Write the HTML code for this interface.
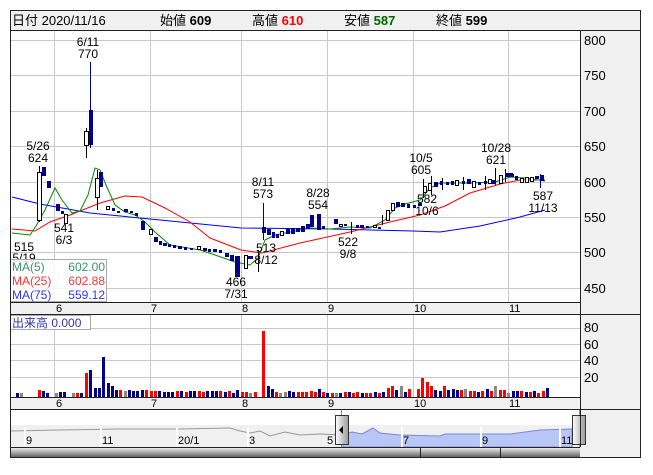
<!DOCTYPE html>
<html><head><meta charset="utf-8"><style>
body{margin:0;background:#fff;width:653px;height:470px;overflow:hidden;font-family:"Liberation Sans","Noto Sans CJK JP",sans-serif}
svg text{font-family:"Liberation Sans","Noto Sans CJK JP",sans-serif}
</style></head><body>
<svg width="653" height="470" xmlns="http://www.w3.org/2000/svg">
<defs>
<linearGradient id="sb" x1="0" y1="0" x2="0" y2="1"><stop offset="0" stop-color="#fafafa"/><stop offset="0.5" stop-color="#a8a8a8"/><stop offset="1" stop-color="#555"/></linearGradient>
<linearGradient id="hd" x1="0" y1="0" x2="1" y2="0"><stop offset="0" stop-color="#fff"/><stop offset="1" stop-color="#999"/></linearGradient>
</defs>
<rect x="0" y="0" width="653" height="470" fill="#fff"/>
<rect x="10" y="10" width="631" height="20" fill="#f0f0f0"/>
<text x="12" y="25" font-size="13" fill="#000">日付 2020/11/16</text>
<text x="160" y="25" font-size="13" fill="#000">始値 <tspan font-weight="bold">609</tspan></text>
<text x="252" y="25" font-size="13" fill="#000">高値 <tspan font-weight="bold" fill="#f00">610</tspan></text>
<text x="344" y="25" font-size="13" fill="#000">安値 <tspan font-weight="bold" fill="#060">587</tspan></text>
<text x="436" y="25" font-size="13" fill="#000">終値 <tspan font-weight="bold">599</tspan></text>
<rect x="580" y="30" width="61" height="428" fill="#f0f0f0"/>
<rect x="10" y="302" width="570" height="13" fill="#f0f0f0"/>
<rect x="10" y="397" width="570" height="13" fill="#f0f0f0"/>
<g stroke="#c8c8c8" stroke-width="1">
<line x1="10" y1="75.5" x2="580" y2="75.5"/><line x1="10" y1="111.5" x2="580" y2="111.5"/><line x1="10" y1="146.5" x2="580" y2="146.5"/><line x1="10" y1="182.5" x2="580" y2="182.5"/><line x1="10" y1="217.5" x2="580" y2="217.5"/><line x1="10" y1="252.5" x2="580" y2="252.5"/><line x1="10" y1="288.5" x2="580" y2="288.5"/><line x1="10" y1="40.5" x2="580" y2="40.5"/>
<line x1="54.5" y1="30" x2="54.5" y2="302"/><line x1="150.5" y1="30" x2="150.5" y2="302"/><line x1="241.5" y1="30" x2="241.5" y2="302"/><line x1="327.5" y1="30" x2="327.5" y2="302"/><line x1="413.5" y1="30" x2="413.5" y2="302"/><line x1="508.5" y1="30" x2="508.5" y2="302"/>
<line x1="10" y1="328.5" x2="580" y2="328.5"/><line x1="10" y1="344.5" x2="580" y2="344.5"/><line x1="10" y1="360.5" x2="580" y2="360.5"/><line x1="10" y1="377.5" x2="580" y2="377.5"/>
<line x1="54.5" y1="315" x2="54.5" y2="397"/><line x1="150.5" y1="315" x2="150.5" y2="397"/><line x1="241.5" y1="315" x2="241.5" y2="397"/><line x1="327.5" y1="315" x2="327.5" y2="397"/><line x1="413.5" y1="315" x2="413.5" y2="397"/><line x1="508.5" y1="315" x2="508.5" y2="397"/>
</g>
<g font-size="13" fill="#000">
<text x="584" y="45">800</text><text x="584" y="80">750</text><text x="584" y="116">700</text><text x="584" y="151">650</text><text x="584" y="187">600</text><text x="584" y="222">550</text><text x="584" y="257">500</text><text x="584" y="293">450</text>
<text x="584" y="332">80</text><text x="584" y="349">60</text><text x="584" y="365">40</text><text x="584" y="382">20</text>
</g>
<g font-size="11" fill="#000">
<text x="56" y="312">6</text><text x="151" y="312">7</text><text x="242" y="312">8</text><text x="328" y="312">9</text><text x="414" y="312">10</text><text x="509" y="312">11</text>
<text x="56" y="407">6</text><text x="151" y="407">7</text><text x="242" y="407">8</text><text x="328" y="407">9</text><text x="414" y="407">10</text><text x="509" y="407">11</text>
</g>
<polyline fill="none" stroke="#00f" stroke-width="1" points="12,197 40,204 90,213 150,219 241,228 330,229 413,231 440,232 480,226 520,217 545,210"/>
<polyline fill="none" stroke="#f00" stroke-width="1" points="12,229 35,231 50,222 70,215 100,203 125,196 142,197 165,208 190,222 210,238 241,250 262,253 300,243 350,232 390,222 420,215 445,206 470,193 500,184 520,180 545,180"/>
<polyline fill="none" stroke="#080" stroke-width="1" points="12,233 30,235 36,226 45,210 55,188 62,200 72,213 80,211 88,195 95,168 100,170 106,185 115,205 125,212 135,215 145,222 155,232 170,245 200,250 215,255 235,262 250,265 258,258 265,240 275,235 290,232 310,228 330,229 350,227 370,228 385,220 395,208 405,204 420,200 430,188 440,183 470,183 495,182 510,177 525,178 545,181"/>
<g stroke="#000" stroke-width="1">
<line x1="90.5" y1="62" x2="90.5" y2="148" stroke="#00008b"/>
<line x1="86.5" y1="128" x2="86.5" y2="158"/>
<line x1="39.5" y1="166" x2="39.5" y2="222"/>
<line x1="263.5" y1="203" x2="263.5" y2="240" stroke="#00008b"/>
<line x1="97.5" y1="170" x2="97.5" y2="210"/>
<line x1="351.5" y1="222" x2="351.5" y2="234"/>
<line x1="423.5" y1="179" x2="423.5" y2="198"/>
<line x1="495.5" y1="168" x2="495.5" y2="185"/>
<line x1="540.5" y1="174" x2="540.5" y2="188" stroke="#00008b"/>
<line x1="258.5" y1="250" x2="258.5" y2="272"/>
<line x1="431.5" y1="176" x2="431.5" y2="195"/><line x1="442.5" y1="178" x2="442.5" y2="190"/><line x1="463.5" y1="177" x2="463.5" y2="190"/><line x1="485.5" y1="176" x2="485.5" y2="190"/><line x1="505.5" y1="169" x2="505.5" y2="182"/><line x1="382.5" y1="215" x2="382.5" y2="225"/>
</g>
<g fill="#fff" stroke="#000" stroke-width="1">
<rect x="37.5" y="172.5" width="4" height="48"/><rect x="84.5" y="131.5" width="4" height="14"/><rect x="95.5" y="178.5" width="4" height="19"/><rect x="64.5" y="214.5" width="3" height="9"/><rect x="149.5" y="229.5" width="3" height="5"/><rect x="244.5" y="255.5" width="3" height="13"/><rect x="386.5" y="210.5" width="3" height="10"/><rect x="391.5" y="203.5" width="3" height="7"/><rect x="423.5" y="186.5" width="3" height="6"/><rect x="428.5" y="183.5" width="3" height="7"/><rect x="499.5" y="175.5" width="3" height="8"/><rect x="520.5" y="178.5" width="3" height="4"/><rect x="280.5" y="231.5" width="3" height="4"/><rect x="197.5" y="246.5" width="3" height="3"/><rect x="106.5" y="206.5" width="3" height="3"/><rect x="455.5" y="180.5" width="3" height="5"/><rect x="472.5" y="181.5" width="3" height="6"/><rect x="530.5" y="177.5" width="3" height="4"/>
<rect x="339.5" y="224.5" width="3" height="2"/><rect x="373.5" y="225.5" width="3" height="2"/><rect x="488.5" y="179.5" width="3" height="4"/><rect x="509.5" y="173.5" width="3" height="3"/><rect x="525.5" y="177.5" width="3" height="5"/>
</g>
<g fill="#00008b">
<rect x="89" y="110" width="4" height="35"/><rect x="42" y="167" width="4" height="9"/><rect x="47" y="181" width="4" height="7"/><rect x="56" y="204" width="4" height="7"/><rect x="61" y="211" width="3" height="3"/><rect x="99" y="172" width="4" height="15"/>
<rect x="112" y="208" width="3" height="3"/><rect x="117" y="211" width="3" height="2"/><rect x="124" y="209" width="4" height="3"/><rect x="130" y="211" width="3" height="2"/><rect x="135" y="213" width="3" height="3"/><rect x="141" y="221" width="4" height="9"/><rect x="154" y="237" width="4" height="5"/><rect x="159" y="241" width="3" height="4"/><rect x="163" y="243" width="4" height="3"/><rect x="168" y="244" width="3" height="3"/><rect x="173" y="245" width="3" height="3"/><rect x="178" y="246" width="4" height="3"/><rect x="184" y="247" width="3" height="3"/><rect x="190" y="248" width="3" height="2"/><rect x="203" y="248" width="4" height="3"/><rect x="208" y="249" width="3" height="3"/><rect x="213" y="249" width="4" height="3"/><rect x="219" y="250" width="3" height="3"/><rect x="225" y="253" width="4" height="4"/><rect x="230" y="255" width="4" height="6"/><rect x="235" y="256" width="5" height="21"/><rect x="248" y="256" width="5" height="3"/>
<rect x="262" y="227" width="4" height="6"/><rect x="267" y="229" width="4" height="6"/><rect x="272" y="232" width="3" height="6"/><rect x="276" y="234" width="3" height="4"/><rect x="286" y="229" width="4" height="5"/><rect x="291" y="228" width="4" height="6"/><rect x="296" y="228" width="4" height="4"/><rect x="301" y="226" width="4" height="6"/><rect x="306" y="224" width="4" height="5"/><rect x="310" y="215" width="4" height="12"/><rect x="317" y="214" width="4" height="16"/><rect x="334" y="219" width="4" height="5"/><rect x="344" y="224" width="3" height="2"/><rect x="360" y="225" width="4" height="3"/><rect x="366" y="226" width="3" height="2"/><rect x="396" y="202" width="4" height="5"/><rect x="401" y="203" width="4" height="4"/><rect x="407" y="204" width="3" height="4"/><rect x="413" y="205" width="3" height="3"/><rect x="418" y="203" width="4" height="3"/><rect x="434" y="182" width="4" height="5"/><rect x="440" y="181" width="3" height="4"/><rect x="446" y="182" width="3" height="3"/><rect x="451" y="181" width="3" height="4"/><rect x="462" y="181" width="3" height="3"/><rect x="467" y="179" width="4" height="5"/><rect x="478" y="182" width="3" height="3"/><rect x="484" y="181" width="3" height="3"/><rect x="505" y="173" width="4" height="4"/><rect x="510" y="174" width="4" height="3"/><rect x="515" y="176" width="3" height="4"/><rect x="535" y="176" width="4" height="3"/><rect x="540" y="175" width="4" height="6"/>
<rect x="322" y="226" width="3" height="3"/><rect x="356" y="225" width="3" height="3"/><rect x="378" y="227" width="3" height="2"/><rect x="492" y="180" width="3" height="4"/>
</g>
<g font-size="12" fill="#000" text-anchor="middle">
<text x="88" y="46">6/11</text><text x="88" y="58">770</text>
<text x="38" y="150">5/26</text><text x="38" y="162">624</text>
<text x="64" y="232">541</text><text x="64" y="244">6/3</text>
<text x="24" y="251">515</text><text x="24" y="262">5/19</text>
<text x="263" y="186">8/11</text><text x="263" y="198">573</text>
<text x="318" y="197">8/28</text><text x="318" y="209">554</text>
<text x="266" y="252">513</text><text x="266" y="264">8/12</text>
<text x="236" y="286">466</text><text x="236" y="298">7/31</text>
<text x="348" y="246">522</text><text x="348" y="258">9/8</text>
<text x="421" y="162">10/5</text><text x="421" y="174">605</text>
<text x="427" y="203">582</text><text x="427" y="215">10/6</text>
<text x="496" y="152">10/28</text><text x="496" y="164">621</text>
<text x="543" y="200">587</text><text x="543" y="212">11/13</text>
</g>
<rect x="10.5" y="259.5" width="96" height="42" fill="#fff" fill-opacity="0.85" stroke="#aaa"/>
<g font-size="12">
<text x="12" y="271" fill="#396">MA(5)</text><text x="105" y="271" fill="#396" text-anchor="end">602.00</text>
<text x="12" y="285" fill="#f33">MA(25)</text><text x="105" y="285" fill="#f33" text-anchor="end">602.88</text>
<text x="12" y="299" fill="#33f">MA(75)</text><text x="105" y="299" fill="#33f" text-anchor="end">559.12</text>
</g>
<rect x="10.5" y="315.5" width="80" height="14" fill="#fff" stroke="#aaa"/>
<text x="12" y="327" font-size="12" fill="#33a">出来高  0.000</text>
<g>
<rect x="16" y="393" width="3" height="4" fill="#00008b"/><rect x="20" y="393" width="3" height="4" fill="#888"/>
<rect x="38" y="390" width="3" height="7" fill="#f00"/><rect x="42" y="391" width="3" height="6" fill="#00008b"/><rect x="46" y="393" width="3" height="4" fill="#00008b"/><rect x="55" y="393" width="3" height="4" fill="#888"/><rect x="59" y="392" width="3" height="5" fill="#00008b"/><rect x="63" y="392" width="3" height="5" fill="#00008b"/><rect x="72" y="393" width="3" height="4" fill="#888"/><rect x="76" y="393" width="3" height="4" fill="#f00"/><rect x="80" y="393" width="3" height="4" fill="#00008b"/>
<rect x="85" y="373" width="3" height="24" fill="#f00"/><rect x="89" y="370" width="3" height="27" fill="#00008b"/><rect x="94" y="388" width="3" height="9" fill="#00008b"/><rect x="98" y="388" width="3" height="9" fill="#00008b"/><rect x="102" y="357" width="3" height="40" fill="#00008b"/><rect x="107" y="383" width="3" height="14" fill="#00008b"/><rect x="111" y="386" width="3" height="11" fill="#00008b"/><rect x="115" y="390" width="3" height="7" fill="#00008b"/><rect x="119" y="390" width="3" height="7" fill="#f00"/><rect x="124" y="391" width="3" height="6" fill="#888"/>
<rect x="128" y="390" width="3" height="7" fill="#00008b"/><rect x="132" y="391" width="3" height="6" fill="#00008b"/><rect x="136" y="391" width="3" height="6" fill="#00008b"/><rect x="141" y="390" width="3" height="7" fill="#00008b"/><rect x="145" y="390" width="3" height="7" fill="#f00"/><rect x="150" y="391" width="3" height="6" fill="#f00"/><rect x="154" y="391" width="3" height="6" fill="#f00"/><rect x="158" y="391" width="3" height="6" fill="#00008b"/><rect x="163" y="392" width="3" height="5" fill="#00008b"/><rect x="167" y="392" width="3" height="5" fill="#00008b"/><rect x="171" y="392" width="3" height="5" fill="#00008b"/><rect x="176" y="391" width="3" height="6" fill="#f00"/><rect x="180" y="391" width="3" height="6" fill="#00008b"/><rect x="185" y="392" width="3" height="5" fill="#f00"/><rect x="189" y="391" width="3" height="6" fill="#00008b"/><rect x="193" y="391" width="3" height="6" fill="#00008b"/><rect x="198" y="391" width="3" height="6" fill="#f00"/><rect x="202" y="392" width="3" height="5" fill="#f00"/><rect x="206" y="391" width="3" height="6" fill="#00008b"/><rect x="211" y="391" width="3" height="6" fill="#00008b"/><rect x="215" y="391" width="3" height="6" fill="#00008b"/><rect x="219" y="391" width="3" height="6" fill="#f00"/><rect x="224" y="392" width="3" height="5" fill="#00008b"/><rect x="228" y="391" width="3" height="6" fill="#f00"/><rect x="232" y="393" width="3" height="4" fill="#00008b"/><rect x="236" y="390" width="3" height="7" fill="#00008b"/><rect x="241" y="392" width="3" height="5" fill="#f00"/><rect x="245" y="392" width="3" height="5" fill="#f00"/><rect x="249" y="393" width="3" height="4" fill="#888"/><rect x="254" y="392" width="3" height="5" fill="#f00"/>
<rect x="262" y="331" width="3" height="66" fill="#f00"/><rect x="267" y="386" width="3" height="11" fill="#00008b"/><rect x="271" y="389" width="3" height="8" fill="#00008b"/><rect x="275" y="392" width="3" height="5" fill="#f00"/><rect x="279" y="393" width="3" height="4" fill="#888"/><rect x="284" y="392" width="3" height="5" fill="#888"/><rect x="288" y="391" width="3" height="6" fill="#00008b"/><rect x="292" y="392" width="3" height="5" fill="#00008b"/><rect x="297" y="392" width="3" height="5" fill="#f00"/><rect x="301" y="392" width="3" height="5" fill="#f00"/><rect x="305" y="392" width="3" height="5" fill="#f00"/><rect x="310" y="391" width="3" height="6" fill="#f00"/><rect x="314" y="392" width="3" height="5" fill="#f00"/><rect x="318" y="389" width="3" height="8" fill="#00008b"/><rect x="322" y="392" width="3" height="5" fill="#f00"/><rect x="326" y="393" width="3" height="4" fill="#00008b"/><rect x="331" y="393" width="3" height="4" fill="#f00"/><rect x="335" y="393" width="3" height="4" fill="#888"/><rect x="339" y="393" width="3" height="4" fill="#00008b"/><rect x="344" y="392" width="3" height="5" fill="#f00"/><rect x="348" y="392" width="3" height="5" fill="#00008b"/><rect x="352" y="393" width="3" height="4" fill="#f00"/><rect x="356" y="392" width="3" height="5" fill="#f00"/><rect x="361" y="393" width="3" height="4" fill="#00008b"/><rect x="365" y="393" width="3" height="4" fill="#f00"/><rect x="369" y="393" width="3" height="4" fill="#f00"/><rect x="374" y="392" width="3" height="5" fill="#00008b"/><rect x="378" y="393" width="3" height="4" fill="#f00"/><rect x="382" y="392" width="3" height="5" fill="#00008b"/><rect x="387" y="388" width="3" height="9" fill="#f00"/><rect x="391" y="386" width="3" height="11" fill="#f00"/><rect x="395" y="390" width="3" height="7" fill="#00008b"/><rect x="400" y="386" width="3" height="11" fill="#888"/><rect x="404" y="392" width="3" height="5" fill="#00008b"/><rect x="408" y="389" width="3" height="8" fill="#f00"/><rect x="417" y="389" width="3" height="8" fill="#f00"/><rect x="421" y="378" width="3" height="19" fill="#f00"/><rect x="426" y="382" width="3" height="15" fill="#f00"/><rect x="430" y="386" width="3" height="11" fill="#f00"/><rect x="434" y="390" width="3" height="7" fill="#00008b"/><rect x="439" y="391" width="3" height="6" fill="#00008b"/><rect x="443" y="386" width="3" height="11" fill="#f00"/><rect x="447" y="390" width="3" height="7" fill="#00008b"/><rect x="452" y="389" width="3" height="8" fill="#00008b"/><rect x="456" y="390" width="3" height="7" fill="#00008b"/><rect x="460" y="390" width="3" height="7" fill="#f00"/><rect x="464" y="389" width="3" height="8" fill="#888"/><rect x="469" y="391" width="3" height="6" fill="#f00"/><rect x="473" y="391" width="3" height="6" fill="#f00"/><rect x="477" y="392" width="3" height="5" fill="#00008b"/><rect x="481" y="391" width="3" height="6" fill="#f00"/><rect x="486" y="389" width="3" height="8" fill="#00008b"/><rect x="490" y="391" width="3" height="6" fill="#f00"/><rect x="494" y="386" width="3" height="11" fill="#888"/><rect x="499" y="390" width="3" height="7" fill="#f00"/><rect x="503" y="390" width="3" height="7" fill="#f00"/><rect x="507" y="393" width="3" height="4" fill="#888"/><rect x="512" y="391" width="3" height="6" fill="#00008b"/><rect x="516" y="391" width="3" height="6" fill="#00008b"/><rect x="520" y="391" width="3" height="6" fill="#f00"/><rect x="525" y="392" width="3" height="5" fill="#00008b"/><rect x="529" y="392" width="3" height="5" fill="#f00"/><rect x="533" y="391" width="3" height="6" fill="#00008b"/><rect x="537" y="393" width="3" height="4" fill="#f00"/><rect x="542" y="391" width="3" height="6" fill="#f00"/><rect x="546" y="388" width="3" height="9" fill="#00008b"/>
</g>
<rect x="10" y="425" width="570" height="22" fill="#f0f0f0"/>
<polyline fill="none" stroke="#999" stroke-width="1" points="10,431 60,430 120,429 180,429 230,428 240,431 250,433 260,431 270,436 285,432 300,435 320,434 343,435"/>
<path d="M343,435 L352,432 L362,434 L373,428 L380,433 L400,435 L440,436 L445,434 L470,434 L510,434 L540,430 L572,429 L572,447 L343,447 Z" fill="#b8c6f8" stroke="#7a88d8"/>
<g fill="#fff"><rect x="24" y="427" width="2" height="20"/><rect x="100" y="427" width="2" height="20"/><rect x="176" y="427" width="2" height="20"/><rect x="247" y="427" width="2" height="20"/><rect x="401" y="427" width="2" height="20"/><rect x="480" y="427" width="2" height="20"/><rect x="559" y="427" width="2" height="20"/></g>
<g font-size="11" fill="#000"><text x="26" y="444">9</text><text x="102" y="444">11</text><text x="178" y="444">20/1</text><text x="249" y="444">3</text><text x="327" y="444">5</text><text x="403" y="444">7</text><text x="482" y="444">9</text><text x="561" y="444">11</text></g>
<line x1="341.5" y1="410" x2="341.5" y2="447" stroke="#4aa0d8"/><line x1="579.5" y1="410" x2="579.5" y2="447" stroke="#4aa0d8"/>
<rect x="335.5" y="415.5" width="13" height="29" fill="url(#hd)" stroke="#333"/>
<path d="M339,430 L343,426 L343,434 Z" fill="#000"/>
<rect x="572.5" y="415.5" width="13" height="29" fill="url(#hd)" stroke="#333"/>
<rect x="10" y="447" width="570" height="11" fill="url(#sb)"/>
<line x1="420.5" y1="447" x2="420.5" y2="458" stroke="#222"/><line x1="500.5" y1="447" x2="500.5" y2="458" stroke="#222"/>
<g stroke="#222" stroke-width="1" fill="none">
<rect x="10.5" y="10.5" width="630" height="447"/>
<line x1="10" y1="30.5" x2="641" y2="30.5"/>
<line x1="580.5" y1="30" x2="580.5" y2="447"/>
<line x1="10" y1="302.5" x2="580" y2="302.5"/>
<line x1="10" y1="314.5" x2="641" y2="314.5"/>
<line x1="10" y1="397.5" x2="580" y2="397.5"/>
<line x1="10" y1="409.5" x2="641" y2="409.5"/>
<line x1="10" y1="447.5" x2="580" y2="447.5"/>
</g>
</svg>
</body></html>
